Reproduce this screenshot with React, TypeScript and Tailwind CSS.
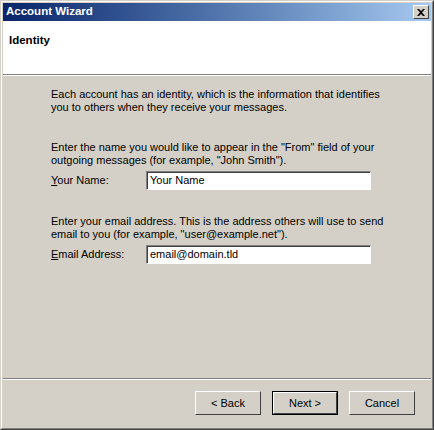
import React from "react";

const font = { fontFamily: '"Liberation Sans", Arial, sans-serif' };

function Field({ hotkey, rest, value }: { hotkey: string; rest: string; value: string }) {
  return (
    <div className="flex items-center h-[19px]">
      <span className="w-[95px]">
        <span className="underline underline-offset-1">{hotkey}</span>
        {rest}
      </span>
      <div className="w-[225px] h-[19px] bg-white border-t border-l border-[#808080] border-r border-b border-r-white border-b-white">
        <div className="h-full border-t border-l border-[#404040] pl-[2px] leading-[15px] text-black">
          {value}
        </div>
      </div>
    </div>
  );
}

function Btn({ children, active }: { children: React.ReactNode; active?: boolean }) {
  return (
    <div className={active ? "border border-black" : ""}>
      <div
        className={
          (active ? "w-[64px] h-[22px]" : "w-[66px] h-[24px]") +
          " bg-[#d4d0c8] border-t border-l border-white border-r border-b border-r-[#404040] border-b-[#404040] flex items-center justify-center"
        }
      >
        {children}
      </div>
    </div>
  );
}

export default function App() {
  return (
    <div
      style={font}
      className="w-[434px] h-[430px] bg-[#d4d0c8] text-[11px] text-black border-t border-l border-[#d4d0c8] border-r border-b border-r-[#404040] border-b-[#404040]"
    >
      <div className="h-full flex flex-col border-t border-l border-white border-r border-b border-r-[#808080] border-b-[#808080] p-[1px]">
        {/* title bar */}
        <div className="h-[18px] flex items-center justify-between bg-gradient-to-r from-[#0a246a] to-[#a6caf0] pl-[3px] pr-[2px]">
          <span className="text-white font-bold text-[11.5px]">Account Wizard</span>
          <div className="w-[16px] h-[14px] bg-[#d4d0c8] border-t border-l border-white border-r border-b border-r-[#404040] border-b-[#404040] flex items-center justify-center">
            <svg width="8" height="7" viewBox="0 0 8 7">
              <path d="M0 0h2l2 2 2-2h2L5 3.5 8 7H6L4 5 2 7H0l3-3.5z" fill="black" />
            </svg>
          </div>
        </div>

        {/* header */}
        <div className="h-[54px] bg-white px-[6px] pt-[11px] border-b border-[#808080]">
          <span className="font-bold text-[11.5px]">Identity</span>
        </div>
        <div className="h-px bg-white" />

        {/* body */}
        <div className="flex-1 pl-[48px] pt-[12px] leading-[13px]">
          <p>
            Each account has an identity, which is the information that identifies
            <br />
            you to others when they receive your messages.
          </p>
          <p className="mt-[27px]">
            Enter the name you would like to appear in the "From" field of your
            <br />
            outgoing messages (for example, "John Smith").
          </p>
          <div className="mt-[4px]">
            <Field hotkey="Y" rest="our Name:" value="Your Name" />
          </div>
          <p className="mt-[25px]">
            Enter your email address. This is the address others will use to send
            <br />
            email to you (for example, "user@example.net").
          </p>
          <div className="mt-[4px]">
            <Field hotkey="E" rest="mail Address:" value="email@domain.tld" />
          </div>
        </div>

        {/* footer */}
        <div className="border-t border-[#808080]">
          <div className="border-t border-white h-[48px] flex items-start justify-end gap-[11px] pt-[11px] pr-[16px]">
            <Btn>&lt; Back</Btn>
            <Btn active>Next &gt;</Btn>
            <Btn>Cancel</Btn>
          </div>
        </div>
      </div>
    </div>
  );
}
